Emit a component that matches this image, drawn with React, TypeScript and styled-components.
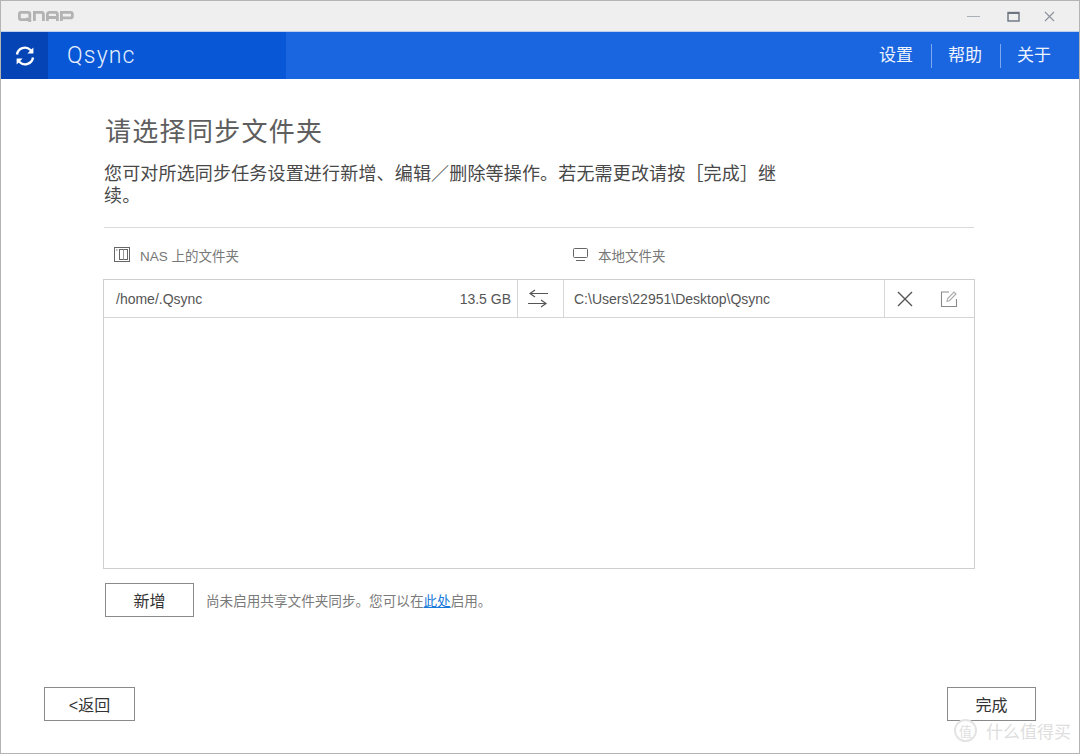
import React from 'react';
import styled, {createGlobalStyle} from 'styled-components';

const GlobalStyle = createGlobalStyle`
  html, body {
    margin: 0;
    padding: 0;
    background: #fff;
  }
  body {
    font-family: "Liberation Sans", "Noto Sans CJK SC", sans-serif;
  }
`;

const Window = styled('div')`
  position: relative;
  box-sizing: border-box;
  width: 1080px;
  height: 754px;
  border: 1px solid #b4b4b4;
  display: flex;
  flex-direction: column;
  overflow: hidden;
  background: #fff;
`;

const TitleBar = styled('div')`
  height: 30px;
  flex: none;
  background: #efefef;
  display: flex;
  align-items: center;
  justify-content: space-between;
  padding-left: 17px;
  padding-right: 13px;
`;

const WindowControls = styled('div')`
  display: flex;
  align-items: center;
`;

const WindowButton = styled('div')<{$width: number}>`
  width: ${p => p.$width}px;
  height: 30px;
  display: flex;
  align-items: center;
  justify-content: center;
`;

const NavBar = styled('div')`
  height: 47px;
  flex: none;
  background: #1a65e0;
  display: flex;
  align-items: stretch;
  justify-content: space-between;
  border-top: 1px solid #bcd0ee;
`;

const Brand = styled('div')`
  width: 285px;
  background: #0757d7;
  display: flex;
  align-items: stretch;
`;

const BrandIcon = styled('div')`
  width: 47px;
  background: #0444b5;
  display: flex;
  align-items: center;
  justify-content: center;
`;

const BrandName = styled('div')`
  margin-left: 19px;
  font-family: Roboto, sans-serif;
  font-size: 23px;
  font-weight: 300;
  letter-spacing: 1.2px;
  color: #e4eefc;
  line-height: 48px;
`;

const NavLinks = styled('div')`
  display: flex;
  align-items: center;
  padding-right: 10px;
`;

const NavLink = styled('div')<{$divided?: boolean}>`
  font-size: 17px;
  color: #eef4fd;
  padding: 0 18px 0 16px;
  height: 24px;
  line-height: 23px;
  border-left: ${p => (p.$divided ? '1px solid #7fa9ee' : 'none')};
`;

const Content = styled('div')`
  flex: 1;
  display: flex;
  flex-direction: column;
  padding: 0 43px 32px;
`;

const Wizard = styled('div')`
  flex: 1;
  margin-left: 59px;
  width: 872px;
  display: flex;
  flex-direction: column;
`;

const Title = styled('h1')`
  margin: 35px 0 0 2px;
  font-size: 26px;
  font-weight: 400;
  line-height: 36px;
  letter-spacing: 1.3px;
  color: #5e5e5e;
`;

const Description = styled('p')`
  margin: 13px 0 0 1px;
  width: 686px;
  font-size: 18px;
  line-height: 22px;
  letter-spacing: 0.17px;
  color: #484848;
`;

const FolderHeader = styled('div')`
  margin: 20px 1px 0;
  height: 52px;
  box-sizing: border-box;
  padding-top: 2px;
  border-top: 1px solid #d9d9d9;
  display: flex;
  align-items: center;
  font-size: 13.5px;
  color: #777;
`;

const HeaderCell = styled('div')<{$width: number}>`
  width: ${p => p.$width}px;
  padding-left: 10px;
  box-sizing: border-box;
  display: flex;
  align-items: center;
  gap: 9px;
`;

const FolderTable = styled('div')`
  height: 290px;
  box-sizing: border-box;
  border: 1px solid #cfcfcf;
  display: flex;
  flex-direction: column;
`;

const FolderRow = styled('div')`
  height: 37px;
  flex: none;
  border-bottom: 1px solid #d6d6d6;
  display: flex;
  align-items: stretch;
  font-size: 14px;
  color: #555;
`;

const NasCell = styled('div')`
  width: 413px;
  padding: 0 6px 0 12px;
  box-sizing: border-box;
  display: flex;
  align-items: center;
  justify-content: space-between;
`;

const IconCell = styled('div')<{$width: number; $divided?: boolean}>`
  width: ${p => p.$width}px;
  padding-right: 5px;
  box-sizing: border-box;
  flex: none;
  border-left: ${p => (p.$divided ? '1px solid #d6d6d6' : 'none')};
  display: flex;
  align-items: center;
  justify-content: center;
`;

const LocalCell = styled('div')`
  flex: 1;
  padding-left: 10px;
  border-left: 1px solid #d6d6d6;
  display: flex;
  align-items: center;
`;

const AddRow = styled('div')`
  margin: 14px 0 0 2px;
  display: flex;
  align-items: center;
  gap: 12px;
`;

const Button = styled('button')<{$width: number}>`
  width: ${p => p.$width}px;
  height: 34px;
  padding: 0;
  background: #fff;
  border: 1px solid #8a8a8a;
  border-radius: 0;
  font-family: inherit;
  font-size: 16px;
  color: #333;
`;

const Hint = styled('span')`
  font-size: 13.6px;
  color: #7a7a7a;
`;

const HintLink = styled('a')`
  color: #1a7ad8;
  text-decoration: underline;
`;

const Footer = styled('div')`
  display: flex;
  align-items: center;
  justify-content: space-between;
`;

const Watermark = styled('div')`
  position: absolute;
  right: 8px;
  bottom: 10px;
  display: flex;
  align-items: center;
  gap: 9px;
  font-size: 17px;
  color: #dedede;
`;

const WatermarkBadge = styled('span')`
  width: 19px;
  height: 19px;
  border: 2px solid #e4e4e4;
  border-radius: 50%;
  display: flex;
  align-items: center;
  justify-content: center;
  font-size: 13px;
  background: #fff;
`;

const QnapLogo = () => (
  <svg width="56" height="11" viewBox="0 0 56 11" fill="none" stroke="#b3b3b3" strokeWidth="2.8">
    <rect x="1.4" y="1.4" width="10.4" height="7.2" rx="1.5" />
    <path d="M8 7.500l5 3" />
    <path d="M16.400 10V1.400h7a2 2 0 0 1 2 2V10" />
    <path d="M29.400 10V3.400a2 2 0 0 1 2-2h6a2 2 0 0 1 2 2V10M29.400 6.500h10" />
    <path d="M43.400 10V1.400h9a2 2 0 0 1 2 2v1.500a2 2 0 0 1-2 2h-9" />
  </svg>
);

const SyncIcon = () => (
  <svg width="20" height="20" viewBox="0 0 20 20" fill="none" stroke="#fff" strokeWidth="2.4">
    <path d="M2 8.500A8 8 0 0 1 15.500 4L17.500 6" />
    <path d="M18.400 1.600v6h-6" strokeWidth="0" fill="#fff" />
    <path d="M18 11.500A8 8 0 0 1 4.500 16L2.500 14" />
    <path d="M1.600 18.400v-6h6" strokeWidth="0" fill="#fff" />
  </svg>
);

const NasIcon = () => (
  <svg width="17" height="16" viewBox="0 0 17 16" fill="none" stroke="#666" strokeWidth="1">
    <rect x="0.500" y="0.500" width="15" height="14" />
    <rect x="5.500" y="2.500" width="8" height="10" />
    <path d="M9.500 2.500v10" stroke="#999" />
    <path d="M2 3h1.500" />
  </svg>
);

const MonitorIcon = () => (
  <svg width="17" height="15" viewBox="0 0 17 15" fill="none" stroke="#666" strokeWidth="1">
    <rect x="1.500" y="1.500" width="14" height="9" rx="1" />
    <path d="M4 13.500h9" />
  </svg>
);

const TwoWayIcon = () => (
  <svg width="20" height="19" viewBox="0 0 20 19" fill="none" stroke="#555" strokeWidth="1.2">
    <path d="M3 4.500h17M7 1L2 4.500 7 8" />
    <path d="M0 14.500h17M13 11l5 3.500-5 3.500" />
  </svg>
);

const CloseIcon = () => (
  <svg width="16" height="16" viewBox="0 0 16 16" fill="none" stroke="#555" strokeWidth="1.4">
    <path d="M1 1l14 14M15 1L1 15" />
  </svg>
);

const EditIcon = () => (
  <svg width="18" height="18" viewBox="0 0 18 18" fill="none" stroke="#8a8a8a" strokeWidth="1.1">
    <path d="M9 2H1.500v14.500h15V9" />
    <path d="M7 11.500l.7-3L14 2l2 2-6.300 6.500z" stroke="#aaa" />
  </svg>
);

export default function App() {
  return (
    <>
      <GlobalStyle />
      <Window>
        <TitleBar>
          <QnapLogo />
          <WindowControls>
            <WindowButton $width={42}>
              <svg width="13" height="3" viewBox="0 0 13 3">
                <path d="M0 1.500h13" stroke="#aab0b8" strokeWidth="1" />
              </svg>
            </WindowButton>
            <WindowButton $width={38}>
              <svg width="13" height="11" viewBox="0 0 13 11" fill="none" stroke="#6c7480">
                <rect x="1" y="1.500" width="11" height="8.500" strokeWidth="1.400" />
                <path d="M1 2h11" strokeWidth="2" />
              </svg>
            </WindowButton>
            <WindowButton $width={34}>
              <svg width="11" height="11" viewBox="0 0 11 11" fill="none" stroke="#8b929b" strokeWidth="1.100">
                <path d="M1 1l9 9M10 1l-9 9" />
              </svg>
            </WindowButton>
          </WindowControls>
        </TitleBar>
        <NavBar>
          <Brand>
            <BrandIcon>
              <SyncIcon />
            </BrandIcon>
            <BrandName>Qsync</BrandName>
          </Brand>
          <NavLinks>
            <NavLink>设置</NavLink>
            <NavLink $divided>帮助</NavLink>
            <NavLink $divided>关于</NavLink>
          </NavLinks>
        </NavBar>
        <Content>
          <Wizard>
            <Title>请选择同步文件夹</Title>
            <Description>
              您可对所选同步任务设置进行新增、编辑／删除等操作。若无需更改请按［完成］继续。
            </Description>
            <FolderHeader>
              <HeaderCell $width={458}>
                <NasIcon />
                <span>NAS 上的文件夹</span>
              </HeaderCell>
              <HeaderCell $width={300}>
                <MonitorIcon />
                <span>本地文件夹</span>
              </HeaderCell>
            </FolderHeader>
            <FolderTable>
              <FolderRow>
                <NasCell>
                  <span>/home/.Qsync</span>
                  <span>13.5 GB</span>
                </NasCell>
                <IconCell $width={46} $divided>
                  <TwoWayIcon />
                </IconCell>
                <LocalCell>C:\Users\22951\Desktop\Qsync</LocalCell>
                <IconCell $width={45} $divided>
                  <CloseIcon />
                </IconCell>
                <IconCell $width={45}>
                  <EditIcon />
                </IconCell>
              </FolderRow>
            </FolderTable>
            <AddRow>
              <Button $width={89}>新增</Button>
              <Hint>
                尚未启用共享文件夹同步。您可以在<HintLink>此处</HintLink>启用。
              </Hint>
            </AddRow>
          </Wizard>
          <Footer>
            <Button $width={91}>&lt;返回</Button>
            <Button $width={89}>完成</Button>
          </Footer>
        </Content>
        <Watermark>
          <WatermarkBadge>值</WatermarkBadge>
          <span>什么值得买</span>
        </Watermark>
      </Window>
    </>
  );
}
